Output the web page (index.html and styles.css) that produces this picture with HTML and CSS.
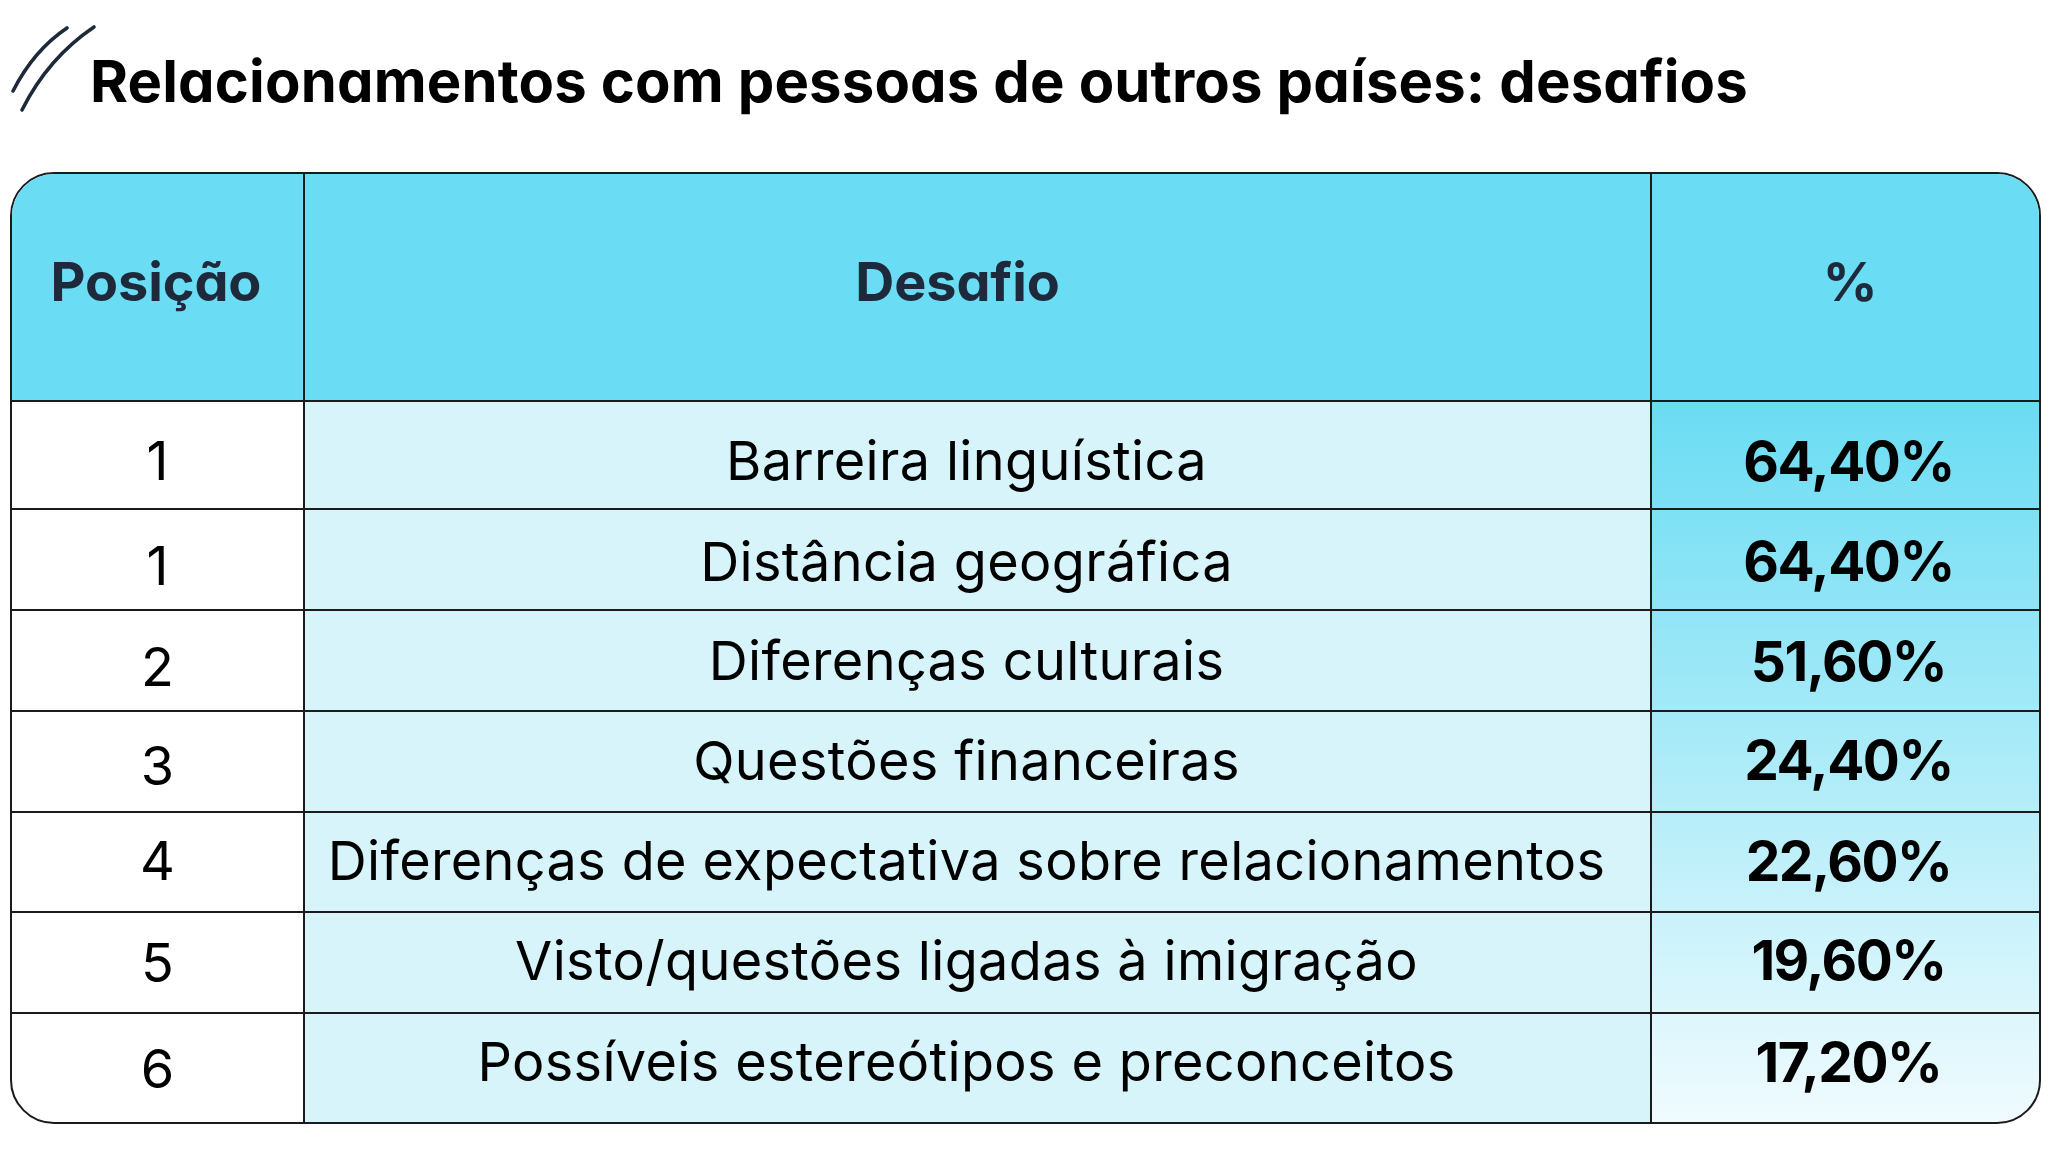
FILE: index.html
```html
<!DOCTYPE html>
<html lang="pt-BR">
<head>
<meta charset="utf-8">
<title>Relacionamentos com pessoas de outros países: desafios</title>
<link rel="stylesheet" href="styles.css">
</head>
<body>
<div class="page">
  <header class="title-bar">
    <svg class="mark" viewBox="0 0 80 120" width="80" height="120" aria-hidden="true">
      <path d="M57 28 Q24 50 3 91" />
      <path d="M84 27 Q38 58 12 110" />
    </svg>
    <h1 class="title">Relacionamentos com pessoas de outros países: desafios</h1>
  </header>

  <div class="table">
    <div class="cell head pos">Posição</div>
    <div class="cell head des">Desafio</div>
    <div class="cell head pct">%</div>

    <div class="cell r1 pos">1</div>
    <div class="cell r1 des">Barreira linguística</div>
    <div class="cell r1 pct">64,40%</div>

    <div class="cell r2 pos">1</div>
    <div class="cell r2 des">Distância geográfica</div>
    <div class="cell r2 pct">64,40%</div>

    <div class="cell r3 pos">2</div>
    <div class="cell r3 des">Diferenças culturais</div>
    <div class="cell r3 pct">51,60%</div>

    <div class="cell r4 pos">3</div>
    <div class="cell r4 des">Questões financeiras</div>
    <div class="cell r4 pct">24,40%</div>

    <div class="cell r5 pos">4</div>
    <div class="cell r5 des">Diferenças de expectativa sobre relacionamentos</div>
    <div class="cell r5 pct">22,60%</div>

    <div class="cell r6 pos">5</div>
    <div class="cell r6 des">Visto/questões ligadas à imigração</div>
    <div class="cell r6 pct">19,60%</div>

    <div class="cell r7 pos last">6</div>
    <div class="cell r7 des last">Possíveis estereótipos e preconceitos</div>
    <div class="cell r7 pct last">17,20%</div>
  </div>
</div>
</body>
</html>
```

FILE: styles.css
```css
* {
  box-sizing: border-box;
}

html,
body {
  margin: 0;
  background: #ffffff;
}

body {
  font-family: Inter, "Noto Sans", sans-serif;
  color: #000000;
}

.page {
  padding: 0 9px 0 10px;
}

.title-bar {
  display: flex;
  align-items: flex-start;
  height: 172px;
}

.mark {
  flex: none;
  width: 80px;
  height: 120px;
  overflow: visible;
}

.mark path {
  fill: none;
  stroke: #1e293b;
  stroke-width: 3.6;
  stroke-linecap: round;
}

.title {
  margin: 52px 0 0 0;
  font-size: 58px;
  line-height: 58px;
  font-weight: 700;
  letter-spacing: 0.15px;
  color: #000000;
  white-space: nowrap;
  font-feature-settings: "cv11" 1;
}

.table {
  display: grid;
  grid-template-columns: 293px 1347px 1fr;
  grid-template-rows: 228px 108px 101px 101px 101px 100px 101px 108px;
  width: 2031px;
  border: 2px solid #1b1b1b;
  border-radius: 44px;
  overflow: hidden;
  background:
    linear-gradient(to bottom, #6adcf3 0%, #f0fbfe 100%) right bottom / 387px 720px no-repeat,
    #ffffff;
}

.cell {
  display: flex;
  align-items: center;
  justify-content: center;
  border-right: 2px solid #1b1b1b;
  border-bottom: 2px solid #1b1b1b;
  font-size: 54px;
  font-weight: 400;
  white-space: nowrap;
}

.cell.des {
  background: #d6f4fa;
  letter-spacing: 0.35px;
  padding-right: 22px;
}

.cell.pct {
  border-right: none;
  font-weight: 700;
  font-size: 55px;
  letter-spacing: -1.5px;
  padding-left: 6px;
}

.cell.last {
  border-bottom: none;
}

.cell.head {
  background: #6addf4;
  color: #1e293b;
  font-weight: 700;
  font-size: 54px;
  letter-spacing: -0.1px;
  padding-top: 0;
  padding-bottom: 11px;
  font-feature-settings: "cv11" 1;
}

.cell.head.pos {
  padding-right: 3px;
}

.cell.head.des {
  padding-right: 40px;
}

.cell.head.pct {
  padding-left: 9px;
}

/* vertical fine placement per row */
.r1 { padding-top: 11px; }
.r2 { padding-top: 3px; }
.r3 { padding-top: 0; }
.r4 { padding-bottom: 3px; }
.r5 { padding-bottom: 3px; }
.r6 { padding-bottom: 5px; }
.r7 { padding-bottom: 13px; }

.r2.pos { padding-top: 11px; }
.r3.pos { padding-top: 11px; }
.r4.pos { padding-top: 7px; padding-bottom: 0; }
.r6.pos { padding-bottom: 0; }
.r7.pos { padding-bottom: 0; }
```
